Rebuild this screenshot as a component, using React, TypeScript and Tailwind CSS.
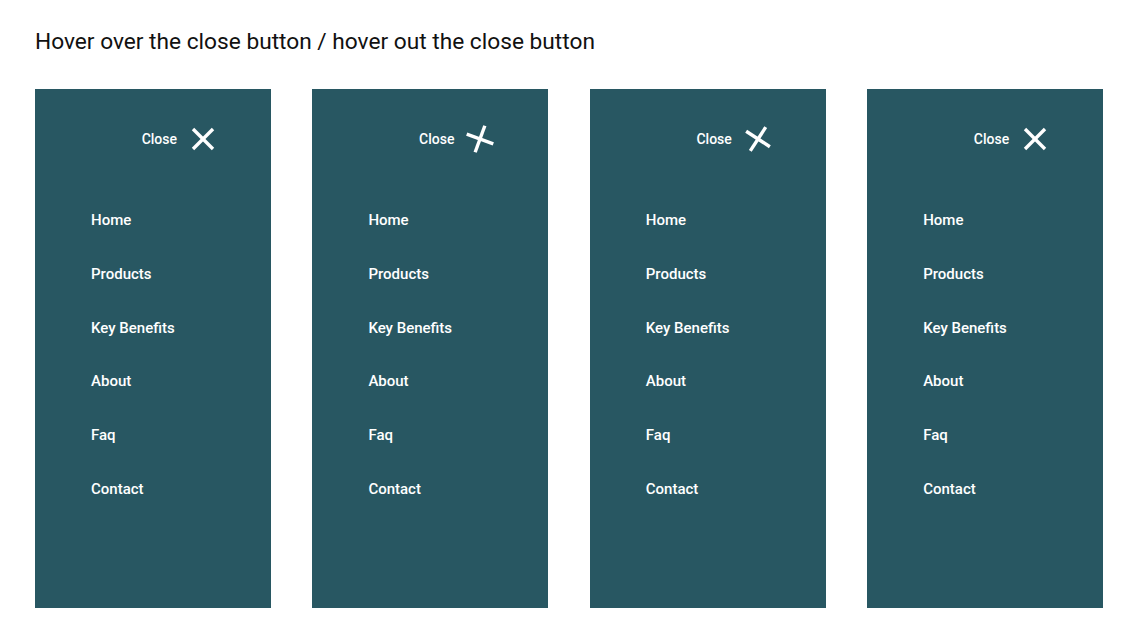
import type { ReactNode } from "react";

const menuItems = ["Home", "Products", "Key Benefits", "About", "Faq", "Contact"];

// each panel shows the close icon at a different point of the hover spin
const panels = [
  { iconClass: "rotate-0" },
  { iconClass: "-rotate-[25deg]" },
  { iconClass: "-rotate-[12deg]" },
  { iconClass: "rotate-0" },
];

function CloseIcon({ className }: { className: string }) {
  return (
    <svg
      width="24"
      height="24"
      viewBox="0 0 24 24"
      className={className}
      fill="none"
      stroke="white"
      strokeWidth="3.4"
    >
      <path d="M2 2 L22 22" />
      <path d="M22 2 L2 22" />
    </svg>
  );
}

function Panel({ children }: { children: ReactNode }) {
  return (
    <div className="w-[236px] h-[519px] bg-[#285762] flex flex-col">{children}</div>
  );
}

export default function App() {
  return (
    <div
      className="w-full h-[643px] bg-white pl-[35px] pt-[29px]"
      style={{ fontFamily: "Roboto, 'Liberation Sans', sans-serif" }}
    >
      <h1 className="text-[22.7px] leading-[26px] text-[#111] font-normal">
        Hover over the close button / hover out the close button
      </h1>

      <div className="flex gap-[41.4px] mt-[34px]">
        {panels.map((panel, index) => (
          <Panel key={index}>
            <div className="flex items-center justify-end pr-[56px] pt-[38px] h-[62px]">
              <span className="text-[14px] font-medium text-white mr-[14px]">Close</span>
              <CloseIcon className={panel.iconClass} />
            </div>
            <ul className="flex flex-col gap-[33.8px] pl-[56px] mt-[59px]">
              {menuItems.map((item) => (
                <li key={item} className="text-[15px] leading-[20px] font-medium text-white">
                  {item}
                </li>
              ))}
            </ul>
          </Panel>
        ))}
      </div>
    </div>
  );
}
